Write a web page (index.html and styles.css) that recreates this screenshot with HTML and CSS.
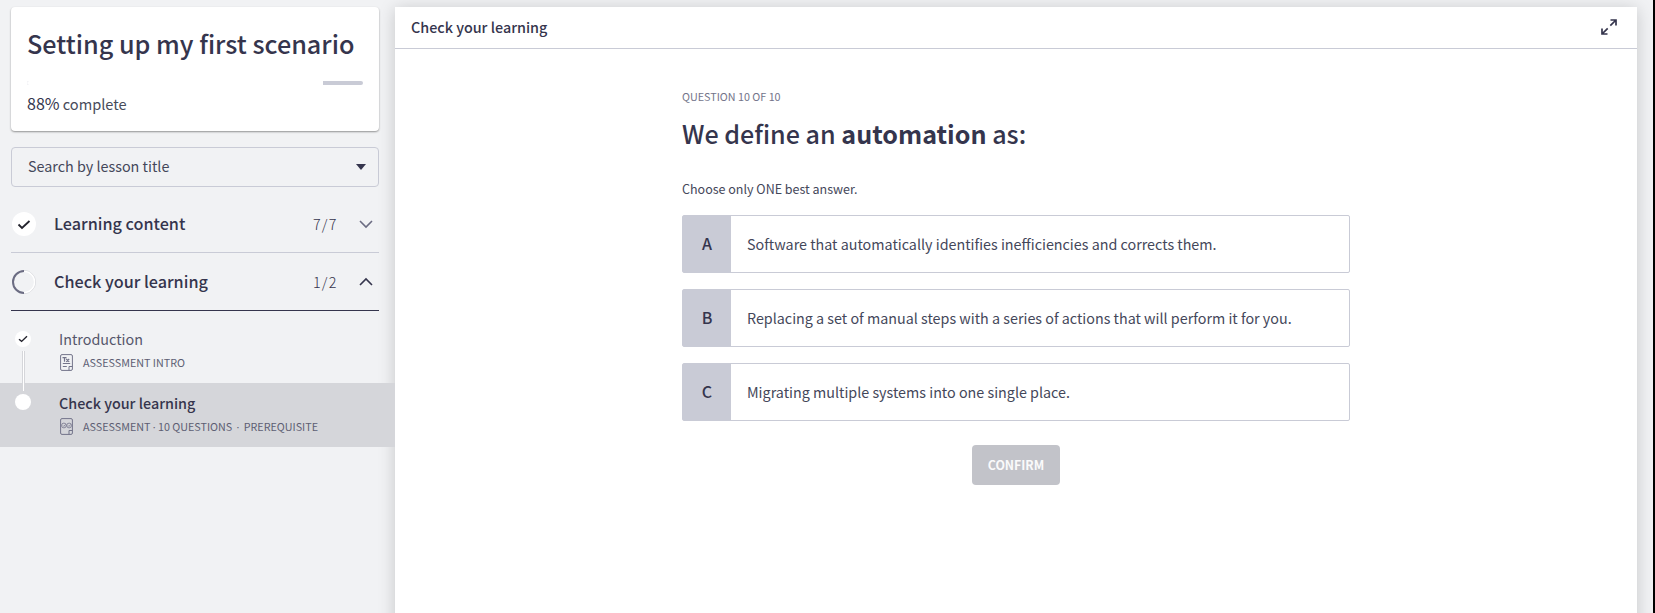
FILE: index.html
```
<!DOCTYPE html>
<html lang="en">
<head>
<meta charset="utf-8">
<title>Setting up my first scenario</title>
<link rel="stylesheet" href="styles.css">
</head>
<body>
<div class="app">
  <aside class="sidebar">
    <section class="course-card">
      <h1 class="course-title"><span>Setting up my first scenario</span></h1>
      <div class="progress"><div class="progress-fill" style="width:88%"></div></div>
      <p class="progress-label"><span class="percent">88%</span> <span class="complete">complete</span></p>
    </section>
    <div class="search"><span class="search-text">Search by lesson title</span><i class="caret"></i></div>
    <div class="section-row">
      <svg class="status" viewBox="0 0 24 24"><circle cx="12" cy="12" r="12" fill="#fff"/><path d="M6.500 12.500l3.500 3.500 7.500-7" fill="none" stroke="#22222c" stroke-width="1.800"/></svg>
      <span class="section-name">Learning content</span>
      <span class="count">7/7</span>
      <svg class="chevron" viewBox="0 0 14 14"><path d="M1 4l6 6 6-6" fill="none" stroke="#6b6c82" stroke-width="1.600"/></svg>
    </div>
    <div class="section-row section-open">
      <svg class="status" viewBox="0 0 24 24"><path d="M12 .5a11.500 11.500 0 0 1 0 23" fill="none" stroke="#d4d5da" stroke-width="1"/><path d="M12 1.400a10.600 10.600 0 0 1 0 21.200" fill="none" stroke="#fff" stroke-width="1.400"/><path d="M12 1a11 11 0 0 0 0 22" fill="none" stroke="#6b6c82" stroke-width="2"/></svg>
      <span class="section-name">Check your learning</span>
      <span class="count">1/2</span>
      <svg class="chevron" viewBox="0 0 14 14"><path d="M1 10l6-6 6 6" fill="none" stroke="#35354d" stroke-width="1.600"/></svg>
    </div>
    <div class="lessons">
      <div class="lesson">
        <svg class="dot" viewBox="0 0 16 16"><circle cx="8" cy="8" r="8" fill="#fff"/><path d="M4 8.200l2.600 2.200L12 5.200" fill="none" stroke="#22222c" stroke-width="1.400"/></svg>
        <div class="lesson-body">
          <div class="lesson-name">Introduction</div>
          <div class="lesson-meta">
            <svg class="doc" viewBox="0 0 13 17"><path d="M2 .6h9Q12.400.6 12.400 2v13q0 1.400-1.400 1.400H2Q.6 16.400.6 15V2Q.6.6 2 .6zM12.400 12.500H9v3.900M2.800 9.500h7.400M2.800 12.500h4" fill="none" stroke="#73748a"/><path d="M2.500 3.700h4M4.500 3.700v4M6.200 5l3 2.800M9.200 5l-3 2.800" fill="none" stroke="#73748a" stroke-width="1.200"/></svg>
            <span>ASSESSMENT INTRO</span>
          </div>
        </div>
        <i class="connector"></i>
      </div>
      <div class="lesson lesson-current">
        <svg class="dot" viewBox="0 0 16 16"><circle cx="8" cy="8" r="8" fill="#fff"/></svg>
        <div class="lesson-body">
          <div class="lesson-name">Check your learning</div>
          <div class="lesson-meta">
            <svg class="doc" viewBox="0 0 13 17"><path d="M2 .6h9Q12.400.6 12.400 2v13q0 1.400-1.400 1.400H2Q.6 16.400.6 15V2Q.6.6 2 .6zM12.400 12.500H9v3.900" fill="none" stroke="#73748a"/><g fill="none" stroke="#73748a" stroke-width=".8"><circle cx="3.900" cy="7.500" r="2.400"/><circle cx="9.100" cy="7.500" r="2.400"/><path d="M2.800 7.400l1 1L5.500 6.500M8 7.400l1 1 1.700-1.900"/></g></svg>
            <span>ASSESSMENT<i class="sep">·</i>10 QUESTIONS<i class="sep sep-wide">·</i>PREREQUISITE</span>
          </div>
        </div>
      </div>
    </div>
  </aside>
  <main class="panel">
    <header class="panel-head">
      <span class="panel-title">Check your learning</span>
      <svg class="expand" viewBox="0 0 16 16"><path d="M9.300 6.700L15 1M9.500 1H15v5.500M6.700 9.300L1 15M6.500 15H1V9.500" fill="none" stroke="#35354d" stroke-width="1.700"/></svg>
    </header>
    <div class="quiz">
      <div class="step">QUESTION 10 OF 10</div>
      <h2 class="question"><span>We define an <b>automation</b> as:</span></h2>
      <p class="hint">Choose only ONE best answer.</p>
      <div class="options">
        <div class="option"><span class="letter">A</span><span class="answer">Software that automatically identifies inefficiencies and corrects them.</span></div>
        <div class="option"><span class="letter">B</span><span class="answer">Replacing a set of manual steps with a series of actions that will perform it for you.</span></div>
        <div class="option"><span class="letter">C</span><span class="answer">Migrating multiple systems into one single place.</span></div>
      </div>
      <button class="confirm">CONFIRM</button>
    </div>
  </main>
</div>
</body>
</html>
```
FILE: styles.css
```
* { box-sizing: border-box; }
body {
  margin: 0;
  background: #f1f2f4;
  color: #35354d;
  font-family: "Source Sans Pro", "Noto Sans CJK SC", sans-serif;
  font-size: 14.35px;
}
.app {
  display: flex;
  height: 613px;
  overflow: hidden;
  padding: 7px 16px 0 0;
  border-right: 2px solid #000;
}
svg { display: block; flex: none; }
.sidebar { width: 395px; flex: none; }
.course-card {
  width: 368px;
  height: 124px;
  margin-left: 11px;
  padding: 19px 16px 0 16px;
  background: #fff;
  border-radius: 4px;
  box-shadow: 0 1px 2px rgba(0, 0, 0, .4);
}
.course-title { margin: 0; font-size: 25.2px; font-weight: 500; line-height: 34px; white-space: nowrap; }
.progress { height: 4px; margin-top: 21px; border-radius: 2px; background: #c9cbd6; overflow: hidden; }
.progress-fill { height: 4px; background: #fff; }
.progress-label { margin: 7px 0 0; line-height: 22px; color: #484b5a; }
.percent { font-size: 16px; color: #35354d; }
.complete { font-size: 14.6px; }
.search {
  display: flex;
  align-items: center;
  justify-content: space-between;
  width: 368px;
  height: 40px;
  margin: 16px 0 8px 11px;
  padding: 0 12px 0 16px;
  border: 1px solid #c9cbd6;
  border-radius: 4px;
  color: #44475a;
}
.search-text { padding-bottom: 3px; }
.caret { border: 5px solid transparent; border-top: 6px solid #35354d; border-bottom: 0; }
.section-row {
  display: flex;
  align-items: center;
  width: 368px;
  height: 58px;
  margin-left: 11px;
  padding: 1px 6px 0 1px;
  border-bottom: 1px solid #c9cbd6;
}
.section-open { border-color: #35354d; }
.status { width: 24px; height: 24px; }
.section-name { margin-left: 18px; padding-bottom: 2px; font-size: 16.2px; font-weight: 500; flex: 1; }
.count { width: 24px; padding-bottom: 2px; color: #35354d; font-weight: 300; letter-spacing: 1.2px; margin-right: 22px; }
.chevron { width: 14px; height: 14px; }
.lessons { padding-top: 8px; }
.lesson { position: relative; display: flex; height: 64px; padding: 11px 0 0 15px; }
.lesson-current { background: #d5d6da; }
.dot { width: 16px; height: 16px; margin-top: 1px; }
.lesson-current .dot { margin-top: 0; }
.lesson-body { margin-left: 28px; }
.lesson-name { line-height: 18px; color: #55566b; }
.lesson-current .lesson-name { font-weight: 500; color: #35354d; }
.lesson-meta { display: flex; gap: 10px; margin: 6px 0 0 1px; font-size: 10.75px; line-height: 17px; color: #5d5e73; white-space: nowrap; }
.sep { display: inline-block; width: 7.5px; text-align: center; font-family: "Open Sans", sans-serif; font-style: normal; line-height: 1; }
.sep-wide { width: 11.4px; }
.doc { width: 13px; height: 17px; }
.connector { position: absolute; left: 22px; top: 32px; width: 3px; height: 40px; background: #fff; border: solid #d5d6da; border-width: 0 1px; z-index: 1; }
.panel {
  flex: 1;
  height: 640px;
  background: #fff;
  box-shadow: 0 2px 16px rgba(0, 0, 0, .18);
}
.panel-head {
  display: flex;
  align-items: center;
  justify-content: space-between;
  height: 42px;
  padding: 0 20px 2px 16px;
  border-bottom: 1px solid #c9cbd6;
  font-weight: 500;
}
.expand { width: 16px; height: 16px; }
.quiz { width: 668px; margin: 0 auto; padding-top: 38px; }
.step { font-size: 10.75px; line-height: 20px; color: #73748a; }
.question { margin: 9px 0 0; font-size: 25.1px; font-weight: 500; line-height: 34px; }
.question b { font-weight: 700; }
.hint { margin: 29px 0 0; font-size: 12.5px; line-height: 20px; color: #44475a; }
.options { display: grid; gap: 16px; margin-top: 16px; }
.option { display: flex; align-items: center; height: 58px; border: 1px solid #c9cbd6; border-radius: 2px; }
.letter { display: flex; align-items: center; justify-content: center; width: 48px; height: 56px; padding-bottom: 2px; background: #c9cbd6; font-size: 16px; font-weight: 500; }
.answer { margin-left: 16px; padding-bottom: 1px; color: #44475a; font-size: 14.32px; }
.confirm {
  display: block;
  width: 88px;
  height: 40px;
  margin: 24px auto 0;
  padding: 0;
  border: 0;
  border-radius: 4px;
  background: #c2c3c9;
  color: #fafafb;
  font: 700 12.3px "Source Sans Pro", "Noto Sans CJK SC", sans-serif;
}
```
